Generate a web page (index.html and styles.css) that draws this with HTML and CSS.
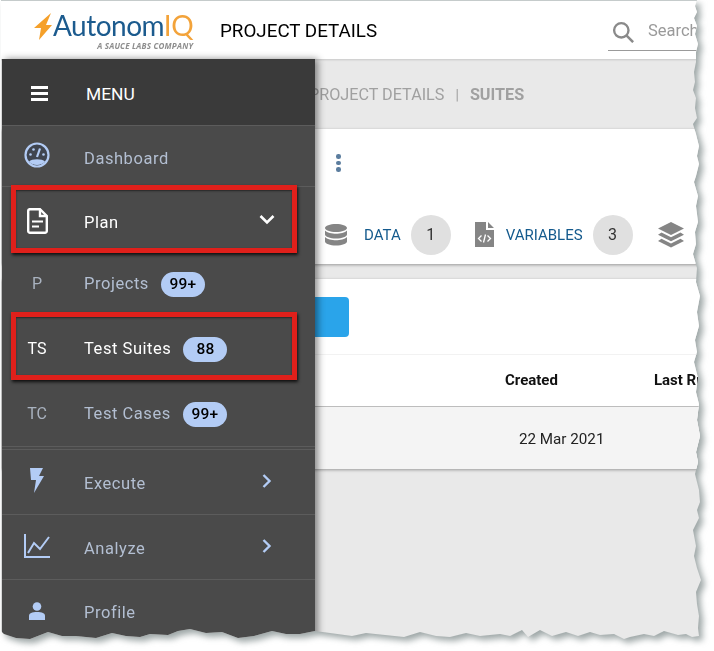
FILE: index.html
```html
<!DOCTYPE html>
<html lang="en">
<head>
    <meta charset="UTF-8">
    <title>Project Details - Suites</title>
    <link rel="stylesheet" href="styles.css">
</head>
<body>

<div class="shot-shadow">
<div class="shot">

    <!-- Top bar -->
    <header class="topbar">
        <div class="logo">
            <svg class="logo-bolt" width="20" height="28" viewBox="0 0 20 28"><path d="M18 0 L1 15 H8 L6 27 L19 12 H13 Z" fill="#f5a02a"/></svg>
            <div class="logo-text">
                <div class="logo-name">Autonom<span class="logo-iq">IQ</span></div>
                <div class="logo-sub">A SAUCE LABS COMPANY</div>
            </div>
        </div>
        <div class="page-title">PROJECT DETAILS</div>
        <div class="search">
            <svg width="22" height="22" viewBox="0 0 26 26"><circle cx="11" cy="11" r="8.500" fill="none" stroke="#8a8a8a" stroke-width="2.800"/><path d="M17 17 L25 25" stroke="#8a8a8a" stroke-width="3"/></svg>
            <span class="search-text">Search</span>
        </div>
    </header>

    <!-- Page content -->
    <main class="content">
        <div class="breadcrumb">PROJECT DETAILS <span class="crumb-sep">|</span> <b>SUITES</b></div>

        <section class="card summary">
            <div class="dots"><i></i><i></i><i></i></div>
            <div class="stats">
                <svg width="22" height="24" viewBox="0 0 22 24"><path d="M11 1 C5 1 0 2.800 0 5 S5 9 11 9 S22 7.200 22 5 S17 1 11 1 Z M0 7.500 V11.500 C0 13.700 5 15.500 11 15.500 S22 13.700 22 11.500 V7.500 C20 9.800 15 10.800 11 10.800 S2 9.800 0 7.500 Z M0 14 V18.500 C0 20.700 5 22.500 11 22.500 S22 20.700 22 18.500 V14 C20 16.300 15 17.300 11 17.300 S2 16.300 0 14 Z" fill="#858585"/></svg>
                <span class="stat-label stat-data">DATA</span>
                <span class="stat-count">1</span>
                <svg class="stat-file" width="19" height="25" viewBox="0 0 19 25"><path d="M0 0 H11 V8 H19 V25 H0 Z M13 0 L19 6 H13 Z" fill="#858585"/><path d="M6.500 13.500 L3.500 16.500 L6.500 19.500 M12.500 13.500 L15.500 16.500 L12.500 19.500 M10.500 12.500 L8.500 20.500" fill="none" stroke="#fff" stroke-width="1.300"/></svg>
                <span class="stat-label stat-vars">VARIABLES</span>
                <span class="stat-count">3</span>
                <svg class="stat-layers" width="26" height="26" viewBox="0 0 26 26"><path d="M13 0 L26 6.500 L13 13 L0 6.500 Z M3.500 10.500 L13 15.300 L22.500 10.500 L26 12.700 L13 19.200 L0 12.700 Z M3.500 16.800 L13 21.500 L22.500 16.800 L26 19 L13 25.500 L0 19 Z" fill="#858585"/></svg>
                <span class="stat-label stat-last">SUITES</span>
            </div>
        </section>

        <section class="card suites">
            <div class="toolbar"><span class="add-btn"></span></div>
            <div class="table-head">
                <span class="col-created">Created</span>
                <span class="col-last">Last Run</span>
            </div>
            <div class="table-row">
                <span class="cell-created">22 Mar 2021</span>
            </div>
        </section>
    </main>

    <!-- Side menu lies over the content -->
    <nav class="sidemenu">
        <div class="menu-head">
            <span class="burger"><i></i><i></i><i></i></span>
            <span class="menu-title">MENU</span>
        </div>

        <div class="row row-dash line">
            <span class="row-icon">
                <svg width="26" height="26" viewBox="0 0 26 26"><circle cx="13" cy="13" r="11.500" fill="#3f4550" stroke="#b3ccf5" stroke-width="2.200"/><path d="M5 19.500 C8 16.500 18 16.500 21 19.500 C18 24 8 24 5 19.500 Z" fill="#b3ccf5"/><path d="M13 15 L16 6.500" stroke="#b3ccf5" stroke-width="2.200"/><circle cx="6.500" cy="12.500" r="1.300" fill="#b3ccf5"/><circle cx="9.500" cy="7.500" r="1.300" fill="#b3ccf5"/><circle cx="19.500" cy="12.500" r="1.300" fill="#b3ccf5"/></svg>
            </span>
            <span class="row-label">Dashboard</span>
        </div>

        <div class="row row-plan active">
            <span class="row-icon">
                <svg width="21" height="26" viewBox="0 0 21 26"><path d="M2 1.200 H13 L19.800 8 V23 A1.800 1.800 0 0 1 18 24.800 H3 A1.800 1.800 0 0 1 1.200 23 V3 A1.800 1.800 0 0 1 3 1.200 Z" fill="none" stroke="#fff" stroke-width="2.400"/><path d="M13 1.500 V8 H19.500" fill="none" stroke="#fff" stroke-width="2.400"/><path d="M5 13.500 H16 M5 18.500 H12" stroke="#fff" stroke-width="2.200"/></svg>
            </span>
            <span class="row-label">Plan</span>
            <svg class="chev" width="16" height="16" viewBox="0 0 16 16"><path d="M1.500 4 L8 10.500 L14.500 4" fill="none" stroke="#fff" stroke-width="2.600"/></svg>
            <span class="mark mark-plan"></span>
        </div>

        <div class="row sub">
            <span class="row-icon">P</span>
            <span class="row-label">Projects</span>
            <span class="badge">99+</span>
        </div>

        <div class="row sub active">
            <span class="row-icon">TS</span>
            <span class="row-label">Test Suites</span>
            <span class="badge">88</span>
            <span class="mark mark-ts"></span>
        </div>

        <div class="row sub row-last-sub">
            <span class="row-icon">TC</span>
            <span class="row-label">Test Cases</span>
            <span class="badge">99+</span>
        </div>

        <div class="row line-top">
            <span class="row-icon">
                <svg width="14" height="25" viewBox="0 0 14 25"><path d="M0 0 H13 L9 8 H14 L4 25 L6 12 H1 Z" fill="#b3ccf5"/></svg>
            </span>
            <span class="row-label">Execute</span>
            <svg class="chev chev-right" width="16" height="16" viewBox="0 0 16 16"><path d="M4.500 2 L10.500 8 L4.500 14" fill="none" stroke="#b3ccf5" stroke-width="2.400"/></svg>
        </div>

        <div class="row line-top">
            <span class="row-icon">
                <svg width="26" height="24" viewBox="0 0 26 24"><path d="M1 0 V23 H26" fill="none" stroke="#b3ccf5" stroke-width="2"/><path d="M4 19 L10 9 L16 15 L25 3" fill="none" stroke="#b3ccf5" stroke-width="2"/></svg>
            </span>
            <span class="row-label">Analyze</span>
            <svg class="chev chev-right" width="16" height="16" viewBox="0 0 16 16"><path d="M4.500 2 L10.500 8 L4.500 14" fill="none" stroke="#b3ccf5" stroke-width="2.400"/></svg>
        </div>

        <div class="row line-top row-profile">
            <span class="row-icon">
                <svg width="16" height="18" viewBox="0 0 16 18"><circle cx="8" cy="4.500" r="4.300" fill="#b3ccf5"/><path d="M0 18 V14 C0 11 3 10 8 10 S16 11 16 14 V18 Z" fill="#b3ccf5"/></svg>
            </span>
            <span class="row-label">Profile</span>
        </div>
    </nav>

</div>
</div>

</body>
</html>
```

FILE: styles.css
```css
html, body {
    margin: 0;
    padding: 0;
    background-color: #fff;
    font-family: Roboto, "Liberation Sans", sans-serif;
    overflow: hidden;
}

/* Torn paper edge */
.shot-shadow {
    width: 714px;
    height: 651px;
    filter: drop-shadow(4px 4px 3px rgba(125, 138, 138, 0.75));
}

.shot {
    position: relative;
    width: 714px;
    height: 651px;
    overflow: hidden;
    background-color: #e9e9e9;
    box-sizing: border-box;
    border-top: 1px solid #c5cbcb;
    clip-path: polygon(
        1px 0, 697px 0, 695px 6px, 697px 12px, 694px 18px, 697px 26px, 695px 34px, 698px 44px, 696px 52px,
        696px 62px, 694px 72px, 695px 82px, 693px 90px, 696px 98px, 695px 108px, 697px 118px, 693px 124px,
        696px 134px, 699px 146px, 697px 156px, 699px 164px, 696px 176px, 694px 182px, 698px 196px, 696px 206px,
        698px 222px, 695px 232px, 696px 244px, 693px 254px, 697px 268px, 696px 282px, 700px 296px, 697px 312px,
        699px 326px, 695px 340px, 697px 352px, 694px 362px, 698px 378px, 696px 392px, 699px 404px, 697px 420px,
        700px 436px, 696px 452px, 698px 462px, 695px 474px, 699px 490px, 700px 502px, 697px 510px, 699px 518px,
        693px 530px, 696px 546px, 694px 556px, 697px 568px, 701px 580px, 696px 592px, 697px 604px, 699px 616px,
        698px 628px, 699px 636px, 692px 637px, 686px 634px, 678px 635px, 664px 631px, 654px 636px, 644px 634px,
        630px 637px, 624px 639px, 614px 634px, 600px 635px, 590px 632px, 578px 636px, 566px 632px, 552px 636px,
        540px 630px, 528px 637px, 522px 630px, 510px 636px, 500px 634px, 480px 636px, 466px 633px, 450px 637px,
        436px 636px, 420px 632px, 404px 637px, 385px 635px, 366px 633px, 352px 636px, 330px 633px, 315px 631px,
        300px 634px, 286px 634px, 272px 631px, 254px 636px, 238px 638px, 222px 632px, 206px 633px, 190px 629px,
        178px 631px, 168px 635px, 150px 634px, 140px 637px, 126px 636px, 112px 633px, 96px 638px, 76px 636px,
        62px 636px, 48px 632px, 30px 639px, 16px 638px, 4px 634px, 1px 631px
    );
}

/* Top bar */
.topbar {
    display: flex;
    align-items: center;
    height: 58px;
    background-color: #fff;
    padding-left: 33px;
    box-shadow: 0 1px 2px rgba(0, 0, 0, 0.15);
    position: relative;
}

.logo {
    display: flex;
    align-items: flex-start;
    flex-shrink: 0;
    width: 187px;
}

.logo-bolt {
    margin-top: 3px;
    flex-shrink: 0;
}

.logo-name {
    font-family: Lato, sans-serif;
    font-size: 28px;
    line-height: 30px;
    color: #1c5b8e;
    letter-spacing: -0.5px;
    white-space: nowrap;
}

.logo-iq {
    color: #f3a33a;
}

.logo-sub {
    font-family: "Open Sans", sans-serif;
    font-size: 8px;
    line-height: 8px;
    font-weight: 700;
    font-style: italic;
    color: #8d8d8d;
    text-align: right;
    letter-spacing: 0.2px;
    margin-top: 2px;
    white-space: nowrap;
}

.page-title {
    font-size: 18.800px;
    color: #000;
    margin-top: 2px;
    width: 388px;
    flex-shrink: 0;
}

.search {
    display: flex;
    align-items: center;
    flex-shrink: 0;
    width: 200px;
    height: 36px;
    gap: 14px;
    padding-left: 4px;
    margin-top: 5px;
    border-bottom: 1px solid #9a9a9a;
}

.search-text {
    font-size: 16.500px;
    color: #9a9a9a;
    margin-bottom: 4px;
}

/* Content */
.content {
    padding-left: 2px;
}

.breadcrumb {
    height: 70px;
    line-height: 72px;
    padding-left: 307px;
    font-size: 16.200px;
    color: #a0a0a0;
    white-space: nowrap;
}

.crumb-sep {
    margin: 0 7px;
    font-size: 14px;
}

.card {
    background-color: #fff;
    box-shadow: 0 1px 3px rgba(0, 0, 0, 0.35);
}

.summary {
    height: 135px;
    box-sizing: border-box;
    padding: 25px 0 0 334px;
    margin-bottom: 15px;
}

.dots {
    display: flex;
    flex-direction: column;
    gap: 2px;
}

.dots i {
    display: block;
    width: 4.500px;
    height: 4.500px;
    border-radius: 50%;
    background-color: #5b7d9e;
}

.stats {
    display: flex;
    align-items: center;
    margin-top: 43px;
    margin-left: -11px;
    white-space: nowrap;
}

.stats svg {
    flex-shrink: 0;
}

.stat-label {
    font-size: 15px;
    color: #145a8d;
}

.stat-data {
    margin-left: 17px;
}

.stat-vars {
    margin-left: 12px;
}

.stat-last {
    margin-left: 12px;
}

.stat-count {
    display: flex;
    flex-shrink: 0;
    justify-content: center;
    align-items: center;
    width: 40px;
    height: 40px;
    margin-left: 10px;
    border-radius: 50%;
    background-color: #e0e0e0;
    font-size: 16px;
    color: #333;
}

.stat-file {
    margin-left: 24px;
}

.stat-layers {
    margin-left: 25px;
}

.suites {
    height: 190px;
}

.toolbar {
    height: 76px;
    box-sizing: border-box;
    padding-top: 18px;
    border-bottom: 1px solid #f2f2f2;
}

.add-btn {
    display: block;
    width: 347px;
    height: 40px;
    border-radius: 4px;
    background-color: #2aa4ea;
}

.table-head {
    position: relative;
    display: flex;
    align-items: center;
    height: 50px;
    padding-bottom: 1px;
    border-bottom: 1px solid #bdbdbd;
    box-sizing: content-box;
    padding-left: 503px;
    font-size: 15px;
    font-weight: 700;
    color: #111;
    white-space: nowrap;
}

.col-last {
    margin-left: 96px;
}

.table-row {
    display: flex;
    align-items: center;
    height: 62px;
    padding-left: 517px;
    background-color: #f4f4f4;
    font-size: 15.200px;
    color: #222;
}

.cell-created {
    margin-top: 2px;
}

/* Side menu */
.sidemenu {
    position: absolute;
    top: 58px;
    left: 2px;
    width: 313px;
    height: 600px;
    background-color: #4a4a4a;
    box-shadow: 3px 0 7px rgba(0, 0, 0, 0.45);
}

.menu-head {
    display: flex;
    align-items: center;
    height: 66px;
    background-color: #3a3a3a;
    border-bottom: 1px solid #5c5c5c;
    color: #fff;
}

.burger {
    display: flex;
    flex-direction: column;
    gap: 3px;
    width: 17px;
    margin-left: 29px;
    margin-top: 2px;
}

.burger i {
    display: block;
    height: 3px;
    background-color: #fff;
}

.menu-title {
    font-size: 17.400px;
    margin-left: 38px;
    margin-top: 4px;
}

.row {
    position: relative;
    display: flex;
    align-items: center;
    height: 65px;
    color: #b3bfd2;
    font-size: 16.500px;
    letter-spacing: 0.55px;
}

.row-dash {
    height: 60px;
}

.row-plan {
    height: 64px;
}

.line {
    border-bottom: 1px solid #5c5c5c;
}

.line-top {
    height: 64px;
    border-top: 1px solid #5c5c5c;
}

.row-last-sub {
    border-bottom: 1px solid #5c5c5c;
    margin-bottom: 2px;
}

.row-icon {
    display: flex;
    justify-content: center;
    align-items: center;
    width: 70px;
    margin-right: 12px;
    margin-top: -3px;
}

.row-label {
    margin-top: 3px;
}

.row-dash .row-label {
    margin-top: 5px;
}

.row-plan .row-label {
    margin-top: 7px;
}

.row-plan .row-icon {
    margin-top: 3px;
}

.row-plan .chev {
    margin-top: 2px;
}

.sub .row-label {
    margin-top: -1px;
}

.row-profile .row-label {
    margin-top: 1px;
}

.sub .row-icon {
    margin-top: 0;
    font-size: 16px;
    letter-spacing: 0;
    color: #a9b2bf;
}

.active,
.sub.active .row-icon {
    color: #fff;
}

.badge {
    display: flex;
    justify-content: center;
    align-items: center;
    width: 44px;
    height: 25px;
    margin-left: 12px;
    margin-top: 1px;
    border-radius: 13px;
    background-color: #b3ccf5;
    color: #000;
    font-size: 15.500px;
    font-weight: 500;
    letter-spacing: 0.2px;
}

.chev {
    margin-left: auto;
    margin-right: 40px;
    margin-top: -3px;
}

/* Red annotation boxes */
.mark {
    position: absolute;
    left: 9px;
    right: 18px;
    border: 5px solid #e0201b;
    box-shadow: 1px 2px 3px rgba(0, 0, 0, 0.8), inset 0 1px 2px rgba(0, 0, 0, 0.5);
    box-sizing: border-box;
}

.mark-plan {
    top: -2px;
    bottom: -2px;
}

.mark-ts {
    top: -4px;
    bottom: 1px;
}
```
